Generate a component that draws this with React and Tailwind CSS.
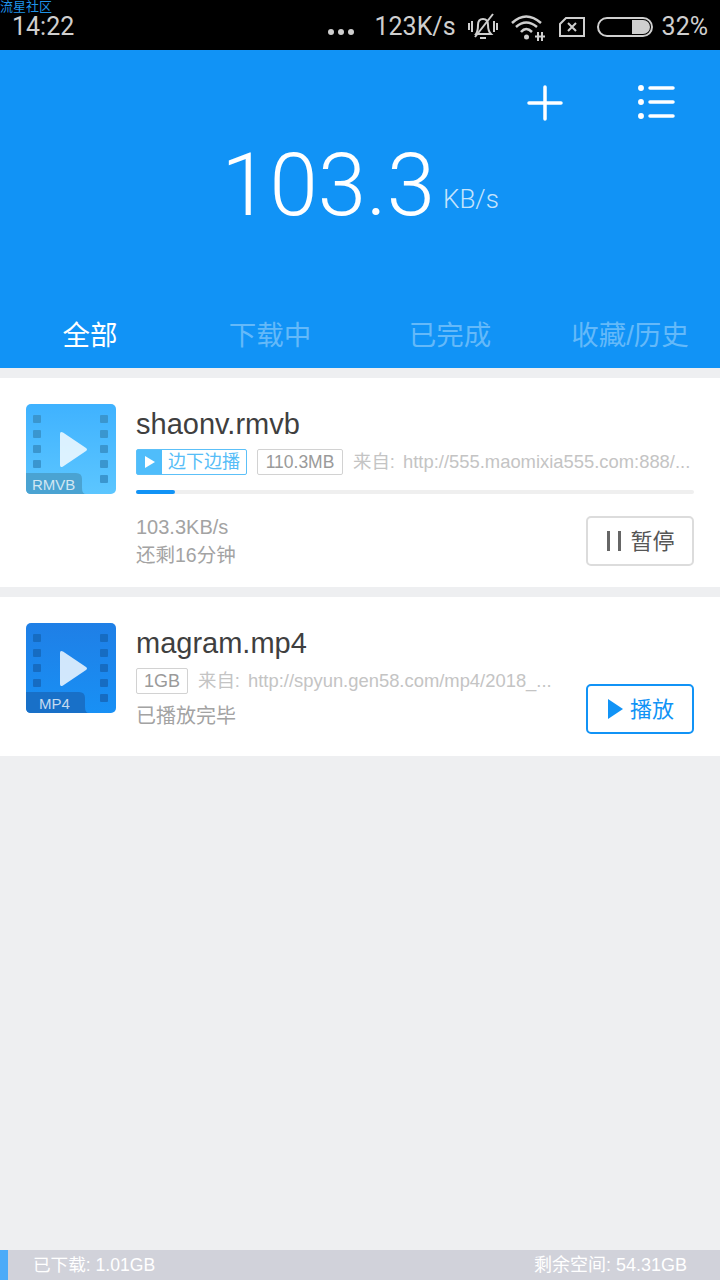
const SANS = "font-['Liberation_Sans','Noto_Sans_CJK_SC',sans-serif]";
const ROBOTO = "font-['Roboto','Noto_Sans_CJK_SC',sans-serif]";

function FileIcon({ label, from, to, dark, hole, tabWidth, textX }) {
  const id = "grad" + label;
  return (
    <svg width="90" height="90" viewBox="0 0 90 90" className="shrink-0">
      <defs>
        <linearGradient id={id} x1="0" y1="0" x2="0" y2="1">
          <stop offset="0" stopColor={from} />
          <stop offset="1" stopColor={to} />
        </linearGradient>
      </defs>
      <rect width="90" height="90" rx="5" fill={`url(#${id})`} />
      {[11, 26, 41, 56].map((y) => (
        <rect key={y} x="7" y={y} width="8" height="8" rx="1" fill={hole} />
      ))}
      {[11, 26, 41, 56, 71].map((y) => (
        <rect key={y} x="74" y={y} width="8" height="8" rx="1" fill={hole} />
      ))}
      <path d="M34 30 Q34 27 37 28.5 L60 44 Q62 45.5 60 47 L37 62.5 Q34 64 34 61 Z" fill="#fff" opacity="0.8" />
      <path d={`M0 69 H${tabWidth - 6} Q${tabWidth} 69 ${tabWidth} 75 V84 Q${tabWidth} 90 ${tabWidth + 4} 90 H5 Q0 90 0 85 Z`} fill={dark} />
      <text x={textX} y="86" fontSize="15" fill="#fff" fillOpacity="0.75" fontFamily="Liberation Sans">
        {label}
      </text>
    </svg>
  );
}

function StatusBar() {
  return (
    <div className={`relative h-[50px] bg-black flex items-center pl-3 pr-[12px] text-[#cfcfcf] ${ROBOTO}`}>
      <span className="absolute left-0 top-0 text-[13px] leading-[14px] text-[#1f93e8]">流星社区</span>
      <span className="text-[25px] leading-none mt-[3px]">14:22</span>
      <div className="ml-auto flex items-center mt-[3px]">
        <div className="flex gap-[4px] mr-[21px] mt-[10px]">
          <i className="block w-[6px] h-[6px] rounded-full bg-[#cfcfcf]" />
          <i className="block w-[6px] h-[6px] rounded-full bg-[#cfcfcf]" />
          <i className="block w-[6px] h-[6px] rounded-full bg-[#cfcfcf]" />
        </div>
        <span className="text-[25px] leading-none mr-[12px]">123K/s</span>
        <svg width="30" height="30" viewBox="0 0 30 30" fill="none" stroke="#cfcfcf" strokeWidth="2" className="mr-[13px]">
          <path d="M8 22 Q10 19 10 13 Q10 7 15 7 Q20 7 20 13 Q20 19 23 22 Z" />
          <path d="M12 26 H18" />
          <path d="M1 11 V18 M4 9 V20 M26 9 V20 M29 11 V18" />
          <path d="M7 25 L25 2" />
        </svg>
        <svg width="34" height="30" viewBox="0 0 34 30" fill="none" stroke="#cfcfcf" className="mr-[13px]">
          <path d="M1 11 Q15 -2 30 11" strokeWidth="2.5" />
          <path d="M5 15 Q15 6 26 15" strokeWidth="2.5" />
          <path d="M10 20 Q15 14 21 20" strokeWidth="2.5" />
          <circle cx="15.5" cy="25" r="2.5" fill="#cfcfcf" stroke="none" />
          <path d="M27 20 V29 M31 20 V29 M24 24.5 H34" strokeWidth="2" />
        </svg>
        <svg width="28" height="22" viewBox="0 0 28 22" fill="none" stroke="#cfcfcf" strokeWidth="2" className="mr-[11px]">
          <path d="M8 2 H26 V20 H2 V8 Z" />
          <path d="M10 7 L18 15 M18 7 L10 15" />
        </svg>
        <div className="relative w-[56px] h-[20px] rounded-full border-2 border-[#cfcfcf] mr-[9px]">
          <div className="absolute right-[1px] top-[1px] bottom-[1px] w-[18px] rounded-r-full bg-[#cfcfcf]" />
        </div>
        <span className="text-[25px] leading-none">32%</span>
      </div>
    </div>
  );
}

function Header() {
  return (
    <div className={`relative h-[318px] bg-[#1193f6] text-white ${ROBOTO}`}>
      <div className="flex justify-end gap-[75px] pt-[35px] pr-[45px]">
        <svg width="36" height="36" viewBox="0 0 36 36" stroke="#fff" strokeWidth="3.5" strokeLinecap="round">
          <path d="M18 2 V34 M2 18 H34" />
        </svg>
        <svg width="37" height="36" viewBox="0 0 37 36" stroke="#fff" strokeWidth="3.5" strokeLinecap="round" fill="#fff">
          <path d="M12 3 H35 M12 17 H35 M12 31 H35" />
          <circle cx="3" cy="3" r="1.2" />
          <circle cx="3" cy="17" r="1.2" />
          <circle cx="3" cy="31" r="1.2" />
        </svg>
      </div>
      <div className="flex items-end justify-center mt-[16px]">
        <span className="text-[87px] leading-[96px] font-light">103.3</span>
        <span className="text-[26px] leading-[32px] mb-[18px] ml-[8px] font-light text-[#c5e4fc]">KB/s</span>
      </div>
      <div className={`absolute left-0 right-0 bottom-[14px] grid grid-cols-[180px_180px_180px_180px] text-[27.5px] leading-[36px] text-[#64b9f9] text-center ${SANS}`}>
        <span className="text-white">全部</span>
        <span>下载中</span>
        <span>已完成</span>
        <span>收藏/历史</span>
      </div>
    </div>
  );
}

function Source({ url }) {
  return (
    <span className="ml-[10px] shrink-0 text-[18.4px] leading-[24px] text-[#c4c4c4] whitespace-nowrap">
      <span className="mr-[3px]">来自:</span> {url}
    </span>
  );
}

function DownloadingCard() {
  return (
    <div className="h-[209px] bg-white mt-[10px] flex pl-[26px] pr-[26px] pt-[26px]">
      <FileIcon label="RMVB" from="#3fb2ff" to="#5cc6ff" dark="#4aa3d2" hole="#3a96cf" tabWidth={56} textX={6} />
      <div className="ml-[20px] flex-1 min-w-0">
        <div className="text-[29px] leading-[40px] text-[#3f3f3f]">shaonv.rmvb</div>
        <div className="flex items-center mt-[5px] h-[26px] overflow-hidden">
          <div className="flex shrink-0 h-[26px] w-[111px] border border-[#5cc0f8] rounded-[2px]">
            <div className="w-[25px] bg-[#4fbdfb] flex items-center justify-center">
              <div className="w-0 h-0 border-y-[6px] border-y-transparent border-l-[10px] border-l-white" />
            </div>
            <span className="ml-[6px] text-[18px] leading-[24px] text-[#56bdf7]">边下边播</span>
          </div>
          <div className="ml-[10px] shrink-0 h-[26px] w-[86px] border border-[#d2d2d2] rounded-[2px] text-[17.5px] leading-[24px] text-[#9a9a9a] text-center">110.3MB</div>
          <Source url="http://555.maomixia555.com:888/..." />
        </div>
        <div className="mt-[15px] h-[4px] rounded-full bg-[#efefef]">
          <div className="h-full w-[39px] rounded-full bg-[#1193f6]" />
        </div>
        <div className="flex justify-between mt-[12px]">
          <div className="text-[20px] leading-[28px] text-[#a3a3a3] pt-[7px]">
            <div>103.3KB/s</div>
            <div className="text-[19.5px]">还剩16分钟</div>
          </div>
          <div className="mt-[10px] w-[108px] h-[50px] rounded-[5px] border-2 border-[#dcdcdc] flex items-center justify-center text-[22px] text-[#555] pl-[2px]">
            <div className="flex gap-[8px] mr-[9px]">
              <i className="block w-[3px] h-[20px] bg-[#666]" />
              <i className="block w-[3px] h-[20px] bg-[#666]" />
            </div>
            暂停
          </div>
        </div>
      </div>
    </div>
  );
}

function FinishedCard() {
  return (
    <div className="h-[159px] bg-white mt-[10px] flex pl-[26px] pr-[26px] pt-[26px]">
      <FileIcon label="MP4" from="#1f7fe6" to="#1890f5" dark="#1870c8" hole="#166cc2" tabWidth={59} textX={13} />
      <div className="ml-[20px] flex-1 min-w-0 relative">
        <div className="text-[29px] leading-[40px] text-[#3f3f3f]">magram.mp4</div>
        <div className="flex items-center mt-[5px] h-[26px]">
          <div className="shrink-0 h-[26px] w-[52px] border border-[#d2d2d2] rounded-[2px] text-[18px] leading-[24px] text-[#9a9a9a] text-center">1GB</div>
          <Source url="http://spyun.gen58.com/mp4/2018_..." />
        </div>
        <div className="mt-[8px] text-[20px] leading-[28px] text-[#a3a3a3]">已播放完毕</div>
        <div className="absolute right-0 top-[61px] w-[108px] h-[50px] rounded-[5px] border-2 border-[#1193f6] flex items-center justify-center text-[22px] text-[#1193f6] pl-[2px]">
          <div className="w-0 h-0 border-y-[10px] border-y-transparent border-l-[15px] border-l-[#1193f6] mr-[7px]" />
          播放
        </div>
      </div>
    </div>
  );
}

export default function App() {
  return (
    <div className={`w-[720px] h-[1280px] flex flex-col bg-[#eeeff1] overflow-hidden ${SANS}`}>
      <StatusBar />
      <Header />
      <DownloadingCard />
      <FinishedCard />
      <div className="mt-auto h-[30px] bg-[#d1d2da] flex items-center text-[18px] text-white">
        <div className="w-[8px] h-full bg-[#4cabf8]" />
        <span className="ml-[25px] text-[17.6px]">已下载: 1.01GB</span>
        <span className="ml-auto mr-[33px]">剩余空间: 54.31GB</span>
      </div>
    </div>
  );
}
